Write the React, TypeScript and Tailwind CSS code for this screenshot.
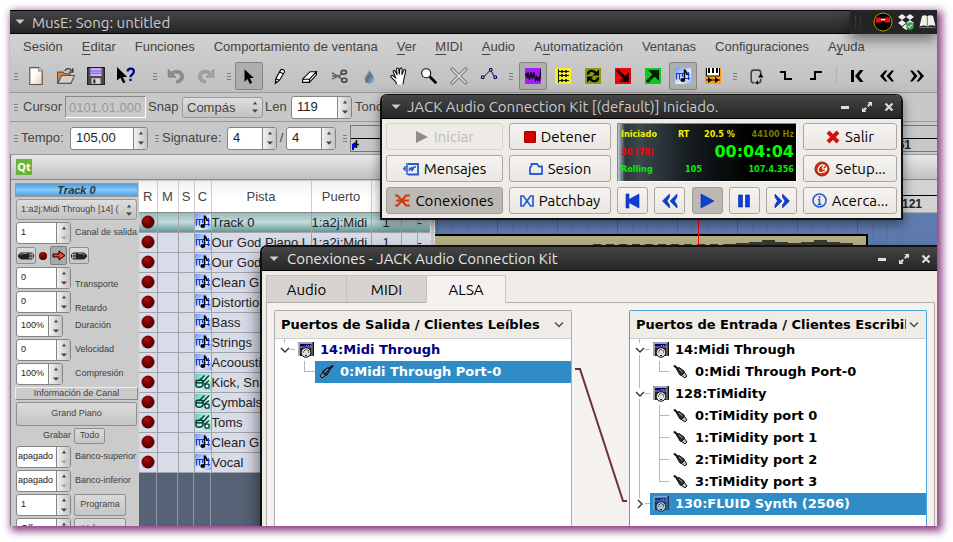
import React from "react";

const ubuntu = "font-['Ubuntu','Noto_Sans',sans-serif]";

/* ---------- small shared pieces ---------- */

function Grip() {
  return (
    <span className="flex flex-col gap-[2px] w-[4px] shrink-0" aria-hidden="true">
      <i className="h-px bg-[#808080]" />
      <i className="h-px bg-[#808080]" />
      <i className="h-px bg-[#808080]" />
    </span>
  );
}

function Arrow({ up = false, dim = false }: { up?: boolean; dim?: boolean }) {
  return (
    <svg width="6" height="4" viewBox="0 0 6 4" aria-hidden="true">
      <path d={up ? "M1 3.5L3 0.5L5 3.5z" : "M0 0.5L3 3.8L6 0.5z"} fill={dim ? "#a5a5a5" : "#444"} />
    </svg>
  );
}

function Spin({
  id,
  label,
  value,
  className,
  dimDown = false,
  size = "normal",
}: {
  id: string;
  label?: string;
  value: string;
  className: string;
  dimDown?: boolean;
  size?: "normal" | "small" | "tight";
}) {
  const text = {
    normal: "px-[5px] text-[13px]",
    small: "px-[4px] text-[9px]",
    tight: "pl-[1px] text-[9px]",
  }[size];
  return (
    <div className={`flex shrink-0 overflow-hidden rounded-[3px] border border-[#858585] bg-white ${className}`}>
      <input
        id={id}
        aria-label={label}
        defaultValue={value}
        className={`min-w-0 flex-1 bg-transparent text-[#222] outline-none ${text}`}
      />
      <span className="flex w-[14px] shrink-0 flex-col border-l border-[#858585] bg-linear-to-r from-[#f2f2f2] to-[#c4c4c4]">
        <button type="button" aria-label="Más" className="flex flex-1 items-center justify-center">
          <Arrow up />
        </button>
        <button type="button" aria-label="Menos" className="flex flex-1 items-center justify-center">
          <Arrow dim={dimDown} />
        </button>
      </span>
    </div>
  );
}

function Combo({ label, value, className }: { label: string; value: string; className: string }) {
  return (
    <div className={`relative shrink-0 ${className}`}>
      <select
        aria-label={label}
        className="h-full w-full appearance-none rounded-[3px] border border-[#999] bg-linear-to-b from-[#dedede] to-[#c2c2c2] pr-[16px] pl-[4px] text-[#444] outline-none"
      >
        <option>{value}</option>
      </select>
      <span className="pointer-events-none absolute inset-y-0 right-[5px] flex flex-col items-center justify-center gap-[4px]">
        <Arrow up />
        <Arrow />
      </span>
    </div>
  );
}

/* ---------- MusE tool icons ---------- */

function Ico({ children, size = 18, box = 16 }: { children: React.ReactNode; size?: number; box?: number }) {
  return (
    <svg width={size} height={size} viewBox={`0 0 ${box} ${box}`} fill="none" aria-hidden="true">
      {children}
    </svg>
  );
}

const NoteGlyph = () => (
  <>
    <rect width="16" height="16" fill="url(#noteBg)" />
    <path d="M1 5.500h8M11 6.500h4M10 10.500h5M1.500 5v6.500M4.500 5v6.500M7.500 5v4M13.500 4v8" stroke="#1a3fc4" strokeWidth="1.200" />
    <path d="M9.500 11V1.500c.5 2 3 2.500 2.500 5.500" stroke="#000" strokeWidth="1.600" />
    <ellipse cx="7.800" cy="12" rx="2.500" ry="2.100" fill="#000" />
  </>
);

const DrumGlyph = () => (
  <>
    <rect width="16" height="16" fill="url(#drumBg)" />
    <path d="M1 7.500v3.500c0 3 6 3 7 0V7.500M1 7.500c0-2 7-2 7 0s-7 2-7 0M4 7l5.500-5.500M8 8l6-6.500M9 10.500l5-4" stroke="#073b35" strokeWidth="1.500" />
    <circle cx="12" cy="12" r="2.200" stroke="#073b35" strokeWidth="1.300" fill="#e8fffa" />
  </>
);

const icons: Record<string, React.ReactNode> = {
  nuevo: (
    <Ico>
      <path d="M2.500 .5h8l3 3v12h-11z" fill="url(#paper)" stroke="#555" />
      <path d="M10.500 .5v3h3" fill="#fff" stroke="#777" />
    </Ico>
  ),
  abrir: (
    <Ico>
      <path d="M.5 14.500V4.500h5l1 1.500h5v2" fill="#d98a42" stroke="#7c4a1c" />
      <path d="M.8 14.500L4 7.500h11.500l-3 7z" fill="#d2cfca" stroke="#555" />
      <path d="M7 3.500c1-3 5-2.500 6 0m1-2.500v3.500h-3.500" stroke="#333" strokeWidth="1.200" />
    </Ico>
  ),
  guardar: (
    <Ico>
      <path d="M.5 .5h15v15h-15z" fill="#4b4b5c" stroke="#222" />
      <path d="M3 1h10v7H3z" fill="#cdb5f5" />
      <path d="M3 3.500h10M3 5.500h10" stroke="#7e4fd8" />
      <path d="M4 10h8v5H4z" fill="#d8d8d8" />
      <path d="M5.500 11h2v3.500h-2z" fill="#333" />
    </Ico>
  ),
  ayuda: (
    <Ico>
      <path d="M0 0v12l3-2.500 2.500 5 2-1-2.300-4.700H9z" fill="#000" />
      <path d="M9.500 4c0-3.500 5.500-3.500 5.500 0 0 2.500-3 2.500-3 5M12 10.500v2" stroke="#00008b" strokeWidth="2" />
    </Ico>
  ),
  deshacer: (
    <Ico>
      <path d="M1 2v7h7L5.500 6.500C8 4.500 12 5 12 8.500c0 2-1.500 3.200-3.500 3.500v2.200c4-.3 6.200-2.500 6.200-5.700C14.700 3 8 1.500 3.700 4.700z" fill="#8e8e8e" stroke="#777" strokeWidth=".6" />
    </Ico>
  ),
  rehacer: (
    <Ico>
      <path d="M15 2v7H8l2.500-2.500C8 4.500 4 5 4 8.500c0 2 1.500 3.200 3.500 3.500v2.200c-4-.3-6.200-2.500-6.200-5.700C1.300 3 8 1.500 12.300 4.700z" fill="#a4a4a4" stroke="#888" strokeWidth=".6" />
    </Ico>
  ),
  puntero: (
    <Ico>
      <path d="M4 2v11l2.700-2.300L8.800 15l2-1-2-4.200h3.500z" fill="#000" />
    </Ico>
  ),
  lapiz: (
    <Ico size={17}>
      <path d="M4 14.500l.5-4.500L9 2c1-1.500 4.500 0 3.500 2L8 11.500zM8 3.500l3.500 2M4.500 10l3.500 1.500" fill="#fff" stroke="#000" />
      <path d="M4 15l.3-3 2 1.200z" fill="#000" />
    </Ico>
  ),
  goma: (
    <Ico size={17}>
      <path d="M1.500 10.500l7-7h6l-6.500 7v3h-6.500zM1.500 10.500H8l6.500-7v3L8 13.500" fill="#fff" stroke="#000" />
    </Ico>
  ),
  tijera: (
    <Ico size={17}>
      <path d="M1 4.500l9.500 6M1 10.500l9.500-5M1 7.500h8" stroke="#666" strokeWidth="1.500" />
      <ellipse cx="12.500" cy="11.500" rx="2.500" ry="1.800" stroke="#444" strokeWidth="1.500" />
      <ellipse cx="12" cy="4" rx="2.500" ry="1.800" stroke="#444" strokeWidth="1.500" />
    </Ico>
  ),
  gota: (
    <Ico size={17}>
      <path d="M8 1.500c1 4 4.500 5.500 4.500 9 0 5.500-9 5.500-9 0C3.500 7 7 5.500 8 1.500z" fill="url(#drop)" />
    </Ico>
  ),
  mano: (
    <Ico>
      <path
        d="M5.500 15.500v-2L1 9c-.8-1.300.7-2.200 2-1l2 1.500L2.800 4c0-1.200 1.400-1.300 2 0l1.500 3L5.800 2c0-1.400 1.800-1.400 2 0l.4 4.500.6-4.700c.2-1.300 2-1 2 .2l-.3 5 1.700-4c.5-1.200 2.100-.7 1.800.5L12.500 10l-1 5.500"
        fill="#fff"
        stroke="#000"
        strokeWidth=".9"
      />
    </Ico>
  ),
  lupa: (
    <Ico>
      <path d="M8.500 8.500l6 6" stroke="#000" strokeWidth="2.400" />
      <circle cx="5.500" cy="5.500" r="4" fill="#fff" stroke="#111" />
    </Ico>
  ),
  mudo: (
    <Ico>
      <path d="M2 2l12 12M14 2L2 14" stroke="#777" strokeWidth="3.200" strokeLinecap="round" />
      <path d="M2 2l12 12M14 2L2 14" stroke="#ddd" strokeWidth="1.500" strokeLinecap="round" />
    </Ico>
  ),
  linea: (
    <Ico size={16}>
      <path d="M2 9.500l7.500-7.500 4.500 7.500" stroke="#111" />
      <path d="M.5 8h2.500v2.500H.5zM8.500 .5H11V3H8.500zM13 8h2.500v2.500H13z" fill="#bcd" stroke="#00005a" />
    </Ico>
  ),
  onda: (
    <Ico size={16}>
      <path d="M0 0h16v16H0z" fill="#a41dff" />
      <path d="M0 6h1l1 4 1-6 1.500 8 1.500-8 1.500 7 1.500-7 1.500 8 1-3 1 4 1-4 1 4 1.500-12 .5 3v5" stroke="#12001d" strokeWidth="1.300" />
    </Ico>
  ),
  lista: (
    <Ico size={16}>
      <path d="M0 0h16v16H0z" fill="#f6ef20" />
      <path d="M3.500 1v14M4 3.500h10M4 7.500h10M4 12.500h10" stroke="#111" />
      <path d="M7 2v3M11 2v3M7 6v3M11 6v3M7 11v3M11 11v3" stroke="#111" strokeWidth="1.600" />
    </Ico>
  ),
  ciclo: (
    <Ico size={16}>
      <path d="M0 0h16v16H0z" fill="#8d9a00" />
      <path d="M3 6.500c0-4 5-5 8-1.500M13 9.500c0 4-5 5-8 1.500" stroke="#000" strokeWidth="2.400" />
      <path d="M7.500 7.500H14V1.500zM8.500 8.500H2v6z" fill="#000" />
    </Ico>
  ),
  entrada: (
    <Ico size={16}>
      <path d="M0 0h16v16H0z" fill="#e80808" />
      <path d="M2 2l9 9" stroke="#1c0000" strokeWidth="3" />
      <path d="M14 4v10H4z" fill="#1c0000" />
    </Ico>
  ),
  salida: (
    <Ico size={16}>
      <path d="M0 0h16v16H0z" fill="#10c81c" />
      <path d="M2 14l9-9" stroke="#001c02" strokeWidth="3" />
      <path d="M3 2h11v11z" fill="#001c02" />
    </Ico>
  ),
  nota: (
    <Ico size={16}>
      <NoteGlyph />
    </Ico>
  ),
  piano: (
    <Ico size={16}>
      <path d="M0 0h16v16H0z" fill="#ff9c0a" />
      <path d="M1.500 0h13v8h-13z" fill="#fff" />
      <path d="M4 0v5M8 0v5M12 0v5" stroke="#000" strokeWidth="2" />
      <path d="M1.500 0v8h13V0M1 12h14" stroke="#000" />
      <path d="M3 9l4 3-4 3zM10 9l4 3-4 3z" fill="#000" />
    </Ico>
  ),
  bucle: (
    <Ico size={17}>
      <path d="M6 14H5.500C4 14 3 13 3 11.500v-7C3 3 4 2 5.500 2h4C11 2 12 3 12 4.500V6M12 10v1.500c0 1.500-1 2.500-2.500 2.500" stroke="#444" strokeWidth="1.500" />
      <path d="M9.500 9h5L12 5zM9.500 11.500v4L6.500 14z" fill="#000" />
    </Ico>
  ),
  pin: (
    <Ico size={16}>
      <path d="M2 4h5v7h7" stroke="#000" strokeWidth="2" />
    </Ico>
  ),
  pout: (
    <Ico size={16}>
      <path d="M2 11h5V4h7" stroke="#000" strokeWidth="2" />
    </Ico>
  ),
  inicio: (
    <Ico size={16}>
      <path d="M2 2h3v12H2zM11 2L6 8l5 6h3.500L10 8l4.500-6z" fill="#000" />
    </Ico>
  ),
  atras: (
    <Ico size={16}>
      <path d="M6 2.500L1 8l5 5.500h2.500L4.500 8l4-5.500zM12.500 2.500L7.500 8l5 5.500H15L11 8l4-5.500z" fill="#000" />
    </Ico>
  ),
  adelante: (
    <Ico size={16}>
      <path d="M10 2.500L15 8l-5 5.500H7.500L11.500 8l-4-5.500zM3.500 2.500L8.500 8l-5 5.500H1L5 8 1 2.500z" fill="#000" />
    </Ico>
  ),
};

function Defs() {
  return (
    <svg width="0" height="0" className="absolute" aria-hidden="true">
      <defs>
        <linearGradient id="paper" x1="0" y1="0" x2="1" y2="1">
          <stop offset="0.4" stopColor="#fff" />
          <stop offset="1" stopColor="#f3c9a6" />
        </linearGradient>
        <linearGradient id="drop" x1="0" y1="0" x2="1" y2="1">
          <stop offset="0.2" stopColor="#8c9aa8" />
          <stop offset="0.5" stopColor="#4f7296" />
          <stop offset="1" stopColor="#a9c4dd" />
        </linearGradient>
        <linearGradient id="noteBg" x1="0" y1="0" x2="1" y2="1">
          <stop offset="0" stopColor="#6f98ff" />
          <stop offset="0.6" stopColor="#e6efff" />
          <stop offset="1" stopColor="#8db0ff" />
        </linearGradient>
        <linearGradient id="drumBg" x1="0" y1="0" x2="1" y2="1">
          <stop offset="0" stopColor="#5ccfc0" />
          <stop offset="0.6" stopColor="#c8f6ee" />
          <stop offset="1" stopColor="#6cd8c8" />
        </linearGradient>
        <radialGradient id="rec" cx="0.4" cy="0.3" r="0.7">
          <stop offset="0" stopColor="#a01414" />
          <stop offset="0.5" stopColor="#7a0000" />
          <stop offset="1" stopColor="#4a0000" />
        </radialGradient>
      </defs>
    </svg>
  );
}

function Tool({ name, on = false }: { name: string; on?: boolean }) {
  return (
    <button
      type="button"
      aria-label={name}
      className={`mx-px flex h-[28px] w-[28px] shrink-0 items-center justify-center rounded-[2px] border ${on ? "border-[#858585] bg-[#aeaeae]" : "border-transparent"}`}
    >
      {icons[name]}
    </button>
  );
}

const menus: [string, number][] = [
  ["Sesión", -1],
  ["Editar", 0],
  ["Funciones", -1],
  ["Comportamiento de ventana", -1],
  ["Ver", 0],
  ["MIDI", 0],
  ["Audio", 0],
  ["Automatización", 1],
  ["Ventanas", -1],
  ["Configuraciones", -1],
  ["Ayuda", 1],
];

function MenuBar() {
  return (
    <nav className="flex h-[26px] items-center gap-[19px] pl-[13px] text-[13px] text-[#444]">
      {menus.map(([m, u]) => (
        <button key={m} type="button" className="shrink-0 whitespace-nowrap">
          {u < 0 ? (
            m
          ) : (
            <>
              {m.slice(0, u)}
              <span className="underline underline-offset-3">{m[u]}</span>
              {m.slice(u + 1)}
            </>
          )}
        </button>
      ))}
    </nav>
  );
}

function ToolBar() {
  const set = (names: string[], on: string[] = []) => names.map((n) => <Tool key={n} name={n} on={on.includes(n)} />);
  return (
    <div className="flex h-[33px] items-center border-b border-[#999]">
      <div className="flex w-[11px] shrink-0 pl-[4px]"><Grip /></div>
      {set(["nuevo", "abrir", "guardar", "ayuda"])}
      <div className="flex w-[20px] shrink-0 justify-center pl-[8px]"><Grip /></div>
      {set(["deshacer", "rehacer"])}
      <div className="flex w-[13px] shrink-0 justify-center pl-[3px]"><Grip /></div>
      {set(["puntero", "lapiz", "goma", "tijera", "gota", "mano", "lupa", "mudo", "linea"], ["puntero"])}
      <div className="flex w-[14px] shrink-0 justify-center"><Grip /></div>
      {set(["onda", "lista", "ciclo", "entrada", "salida", "nota", "piano"], ["onda", "nota"])}
      <div className="flex w-[13px] shrink-0 justify-center"><Grip /></div>
      {set(["bucle", "pin", "pout"])}
      <div className="flex w-[11px] shrink-0 justify-center"><i className="h-[18px] w-px bg-[#b0b0b0]" /></div>
      {set(["inicio", "atras", "adelante"])}
    </div>
  );
}

function CursorBar() {
  return (
    <div className="flex h-[29px] items-center border-b border-[#999] pl-[4px] text-[13px] text-[#444]">
      <Grip />
      <label htmlFor="cursor" className="ml-[5px] w-[42px]">Cursor</label>
      <input
        id="cursor"
        disabled
        defaultValue="0101.01.000"
        className="h-[22px] w-[81px] border border-t-[#888] border-r-white border-b-white border-l-[#888] bg-[#c9c9c9] px-[3px] text-[13px] text-[#9a9a9a]"
      />
      <span className="ml-[2px] w-[34px]">Snap</span>
      <Combo label="Snap" value="Compás" className="h-[21px] w-[81px]" />
      <label htmlFor="len" className="ml-[2px] w-[26px]">Len</label>
      <Spin id="len" value="119" className="h-[23px] w-[61px]" />
      <span className="ml-[3px]">Tono</span>
    </div>
  );
}

function Flag() {
  return (
    <svg width="8" height="10" viewBox="0 0 8 10" aria-hidden="true">
      <path d="M0 10V4l5-3v6L2 8v2z" fill="#0000e0" />
      <path d="M4.500 0v8M4 4.500h3" stroke="#111" strokeWidth="1.500" />
    </svg>
  );
}

function TempoBar() {
  return (
    <div className="flex h-[33px] items-center border-b border-[#999] pl-[4px] text-[13px] text-[#444]">
      <Grip />
      <label htmlFor="tempo" className="ml-[3px] w-[49px]">Tempo:</label>
      <Spin id="tempo" value="105,00" className="h-[23px] w-[78px]" />
      <span className="mr-[3px] ml-[7px]"><Grip /></span>
      <label htmlFor="sig" className="w-[65px]">Signature:</label>
      <Spin id="sig" value="4" className="h-[23px] w-[50px]" />
      <span className="w-[9px] text-center">/</span>
      <Spin id="sig2" label="Denominador" value="4" className="h-[23px] w-[50px]" />
      <span className="mr-[3px] ml-[7px]"><Grip /></span>
      <div className="flex h-[27px] flex-1 flex-col border border-r-0 border-[#777]">
        <div className="h-[13px] border-b border-black" />
        <div className="flex flex-1 items-center justify-between pr-[26px] pl-px">
          <Flag />
          <span className="text-[12px] leading-none font-bold text-[#222]">61</span>
        </div>
      </div>
    </div>
  );
}

/* ---------- track strip ---------- */

function Param({
  id,
  label,
  value,
  narrow = false,
  low = false,
  dimDown = false,
  tight = false,
}: {
  id: string;
  label: string;
  value: string;
  narrow?: boolean;
  low?: boolean;
  dimDown?: boolean;
  tight?: boolean;
}) {
  return (
    <div className={`flex h-[22px] shrink-0 ${low ? "items-end" : "items-center"}`}>
      <div className="flex w-[59px] shrink-0">
        <Spin
          id={id}
          value={value}
          size={tight ? "tight" : "small"}
          dimDown={dimDown}
          className={narrow ? "h-[22px] w-[47px]" : "h-[22px] w-[55px]"}
        />
      </div>
      <label htmlFor={id} className={`whitespace-nowrap ${low ? "leading-[9px]" : ""}`}>{label}</label>
    </div>
  );
}

const softBtn = "rounded-[2px] border border-[#8f8f8f] bg-linear-to-b from-[#dadada] to-[#c6c6c6] text-[#444]";

function Jack({ flip = false }: { flip?: boolean }) {
  return (
    <svg width="16" height="10" viewBox="0 0 16 10" className={flip ? "-scale-x-100" : ""} aria-hidden="true">
      <path d="M0 4l3-2.500h8v7H3L0 6z" fill="#222" />
      <path d="M2 4l3-1.500h4" stroke="#888" fill="none" />
      <path d="M11 2h2.500l2 1.500v3l-2 1.500H11z" fill="#fff" stroke="#222" />
      <path d="M10 5h6M13 2v6" stroke="#222" />
    </svg>
  );
}

function TrackStrip() {
  return (
    <aside className="flex w-[125px] shrink-0 flex-col gap-[2px] overflow-hidden pt-[2px] pl-[1px] pr-[1px] text-[9px] text-[#404040]">
      <h2 className="h-[14px] shrink-0 border border-[#999] bg-linear-to-b from-[#4fa0dc] via-[#86c8f8] to-[#4fa0dc] text-center text-[11px] leading-[12px] font-bold text-[#333] italic">
        Track 0
      </h2>
      <div className="flex flex-col gap-[2px] px-px">
        <Combo label="Puerto MIDI" value="1:a2j:Midi Through [14] (" className="h-[21px] w-full" />
        <Param id="canal" label="Canal de salida" value="1" dimDown />
        <div className="flex h-[19px] shrink-0 items-center gap-[2px]">
          <button type="button" aria-label="Entradas" className={`flex h-[17px] w-[20px] items-center justify-center ${softBtn}`}><Jack /></button>
          <svg width="10" height="10" viewBox="0 0 10 10" aria-hidden="true"><circle cx="5" cy="5" r="4" fill="url(#rec)" /></svg>
          <button type="button" aria-label="Monitor" className="flex h-[19px] w-[17px] items-center justify-center rounded-[2px] border border-[#808080] bg-[#a9a9a9]">
            <svg width="14" height="11" viewBox="0 0 14 11" aria-hidden="true"><path d="M1 4h6V1l6 4.500L7 10V7H1z" fill="#ff3b3b" stroke="#000" /></svg>
          </button>
          <button type="button" aria-label="Salidas" className={`flex h-[17px] w-[20px] items-center justify-center ${softBtn}`}><Jack flip /></button>
        </div>
        <Param id="transporte" label="Transporte" value="0" low />
        <Param id="retardo" label="Retardo" value="0" low />
        <Param id="duracion" label="Duración" value="100%" narrow />
        <Param id="velocidad" label="Velocidad" value="0" />
        <Param id="compresion" label="Compresión" value="100%" narrow />
      </div>
      <h3 className="h-[13px] shrink-0 border border-t-[#eee] border-r-[#888] border-b-[#888] border-l-[#eee] text-center leading-[11px]">Información de Canal</h3>
      <div className="flex flex-col gap-[2px] px-px">
        <button type="button" className={`h-[24px] shrink-0 ${softBtn}`}>Grand Piano</button>
        <div className="flex h-[16px] shrink-0 items-center">
          <span className="w-[55px] text-right">Grabar</span>
          <button type="button" className={`ml-[3px] h-[16px] w-[31px] ${softBtn}`}>Todo</button>
        </div>
        <Param id="bsup" label="Banco-superior" value="apagado" dimDown tight />
        <Param id="binf" label="Banco-inferior" value="apagado" dimDown tight />
        <div className="flex shrink-0 gap-[3px]">
          <Spin id="prog" label="Programa" value="1" size="small" className="h-[22px] w-[55px]" />
          <button type="button" className={`w-[52px] ${softBtn}`}>Programa</button>
        </div>
        <div className="flex shrink-0 gap-[3px]">
          <Spin id="vol" label="Volumen" value="Off" size="small" className="h-[22px] w-[55px]" />
          <button type="button" className={`w-[52px] ${softBtn}`}>Volumen</button>
        </div>
      </div>
    </aside>
  );
}

/* ---------- track list ---------- */

const tracks: [string, boolean][] = [
  ["Track 0", false],
  ["Our God Piano L", false],
  ["Our God", false],
  ["Clean G", false],
  ["Distortion", false],
  ["Bass", false],
  ["Strings", false],
  ["Acooustic", false],
  ["Kick, Snare", true],
  ["Cymbals", true],
  ["Toms", true],
  ["Clean G", false],
  ["Vocal", false],
];

const colClass = ["w-[18px]", "w-[21px]", "w-[16px]", "w-[17px]", "w-[100px]", "w-[60px]", "w-[30px]", "w-[16px]", "w-[13px]"];
const heads = ["R", "M", "S", "C", "Pista", "Puerto", "C", "", ""];

function TrackList() {
  const cell = "border-r border-b border-[#a2a2a8] p-0";
  return (
    <div className="flex w-[291px] shrink-0 flex-col overflow-hidden">
      <table className="w-[291px] table-fixed border-collapse text-[13px] text-[#222]">
        <colgroup>
          {colClass.map((c, i) => (
            <col key={i} className={c} />
          ))}
        </colgroup>
        <thead>
          <tr className="h-[31px] bg-white text-[#444]">
            {heads.map((h, i) => (
              <th key={i} className="border-r border-b border-r-[#ccc] border-b-[#888] bg-linear-to-b from-[#f0f0f0] via-white to-white p-0 font-normal">{h}</th>
            ))}
          </tr>
        </thead>
        <tbody>
          {tracks.map(([name, drum], i) => (
            <tr key={i} className={`h-[20px] ${i === 0 ? "bg-linear-to-b from-[#8fb8b8] via-[#c3dada] to-[#5f9898]" : "bg-[#d8dce8]"}`}>
              <td className={cell}>
                <svg width="14" height="14" viewBox="0 0 14 14" className="mx-auto block" aria-label="Grabar"><circle cx="7" cy="7" r="6.500" fill="url(#rec)" /></svg>
              </td>
              <td className={cell} />
              <td className={cell} />
              <td className={cell}>
                <Ico size={16}>{drum ? <DrumGlyph /> : <NoteGlyph />}</Ico>
              </td>
              <td className={`overflow-hidden leading-[19px] whitespace-nowrap ${cell}`}>{name}</td>
              <td className={`overflow-hidden leading-[19px] whitespace-nowrap ${cell}`}>{i < 2 ? "1:a2j:Midi" : ""}</td>
              <td className={`text-center leading-[19px] ${cell}`}>{i < 2 ? "1" : ""}</td>
              <td className={cell} />
              <td className={`leading-[19px] ${cell}`}>{i < 2 ? "-" : ""}</td>
            </tr>
          ))}
        </tbody>
      </table>
      <div className="flex flex-1 bg-[#566275]">
        {colClass.map((c, i) => (
          <i key={i} className={`${c} shrink-0 border-r border-[#8e94a0]`} />
        ))}
      </div>
    </div>
  );
}

function Arranger() {
  const notes = [0, 0, 0, 0, 0, 0, 0, 0, 0, 0, 0, 1, 2, 4, 2, 1, 2, 4, 2, 1];
  return (
    <div className="flex min-w-0 flex-1 flex-col">
      <div className="flex h-[32px] shrink-0 flex-col border-b border-[#aaa] bg-[#d2d2d2]">
        <div className="h-[15px] border-b border-black" />
        <div className="flex flex-1 items-center justify-end pr-[15px] text-[12px] leading-none font-bold text-[#222]">121</div>
      </div>
      <svg className="min-h-0 w-full flex-1" aria-label="Pistas">
        <rect width="100%" height="100%" fill="#5f7bae" />
        {Array.from({ length: 32 }, (_, i) => (
          <path key={i} d={`M${i * 15 + 2.5} 0v312`} stroke={i % 4 ? "#5a75a6" : "#4d6592"} />
        ))}
        <rect x="-2" y="22" width="434" height="24" fill="#b8b085" stroke="#000" strokeWidth="2" />
        {notes.map((h, i) => (
          <rect key={i} x={158 + i * 13} y={31 - h} width={i < 10 ? 8 : 13} height={h + 2} fill="#3a3a32" />
        ))}
        <path d="M263.500 0v40" stroke="#f00" />
      </svg>
    </div>
  );
}

/* ---------- window frames ---------- */

function WinButtons() {
  return (
    <span className="ml-auto flex items-center gap-[10px]">
      <button type="button" aria-label="Minimizar"><svg width="12" height="12" viewBox="0 0 12 12"><path d="M2 5h8v3H2z" fill="#ddd" /></svg></button>
      <button type="button" aria-label="Maximizar"><svg width="12" height="12" viewBox="0 0 12 12"><path d="M6.500 1H11v4.500L9.500 4 7.500 6 6 4.500l2-2zM1 6.500V11h4.500L4 9.500l2-2L4.500 6l-2 2z" fill="#ddd" /></svg></button>
      <button type="button" aria-label="Cerrar"><svg width="12" height="12" viewBox="0 0 12 12"><path d="M2.500 2.500l7 7M9.500 2.500l-7 7" stroke="#ddd" strokeWidth="2.200" /></svg></button>
    </span>
  );
}

function TitleArrow() {
  return (
    <svg width="10" height="6" viewBox="0 0 10 6" aria-hidden="true"><path d="M.5 .5h9L5 5z" fill="#ccc" /></svg>
  );
}

const bar = "flex h-[24px] shrink-0 items-center border-b border-black bg-linear-to-b from-[#454545] to-[#262626] text-[15px] leading-none";

/* ---------- JACK control ---------- */

const jBtn = "flex h-[27px] items-center justify-center gap-[5px] rounded-[3px] border whitespace-nowrap text-[15px] leading-none";
const jUp = "border-[#aaa6a2] bg-linear-to-b from-[#f5f3f1] to-[#ebe7e3] text-black";
const jDown = "border-[#a09c98] bg-[#bcb8b4] text-black";
const jOff = "border-[#d6d2ce] bg-[#eeebe7] text-[#bcbab8]";

function Transport({ label, d, down = false }: { label: string; d: string; down?: boolean }) {
  return (
    <button type="button" aria-label={label} className={`${jBtn} ${down ? jDown : jUp} w-[31px]`}>
      <svg width="16" height="16" viewBox="0 0 16 16"><path d={d} fill="#0b3fd8" stroke="#0a2a9a" strokeWidth=".6" /></svg>
    </button>
  );
}

function JackWindow() {
  return (
    <section className={`absolute top-[84px] left-[370px] flex w-[523px] flex-col overflow-hidden rounded-t-[7px] border-2 border-t border-[#111] bg-[#efebe7] shadow-[0_4px_12px_rgba(0,0,0,.45)] ${ubuntu}`}>
      <header className={`${bar} gap-[6px] pr-[6px] pl-[9px] text-[#ccc]`}>
        <TitleArrow />
        <h2>JACK Audio Connection Kit [(default)] Iniciado.</h2>
        <WinButtons />
      </header>
      <div className="grid grid-cols-[117px_102px_180px_1fr] gap-x-[6px] p-[4px]">
        <div className="flex flex-col gap-[5px]">
          <button type="button" disabled className={`${jBtn} ${jOff}`}>
            <svg width="14" height="14" viewBox="0 0 14 14"><path d="M1 1l12 6-12 6z" fill="#8c8c8c" /></svg>
            Iniciar
          </button>
          <button type="button" className={`${jBtn} ${jUp}`}>
            <svg width="16" height="14" viewBox="0 0 16 14" fill="none" stroke="#2a5bd0"><path d="M5 2h10v10.500H5" strokeWidth="1.800" /><path d="M0 6.500h2V4v5M4 1v12M6.500 5.500V9M6.500 7h1.500l1-2v4l2-4h2" strokeWidth="1.500" /></svg>
            Mensajes
          </button>
          <button type="button" className={`${jBtn} ${jDown}`}>
            <svg width="15" height="13" viewBox="0 0 15 13" fill="none" stroke="#d83a10" strokeWidth="2.200"><path d="M0 1.500h2.500l8.500 10h4M0 11.500h2.500L11 1.500h4M1 6.500h13" /></svg>
            Conexiones
          </button>
        </div>
        <div className="flex flex-col gap-[5px]">
          <button type="button" className={`${jBtn} ${jUp}`}>
            <i className="h-[12px] w-[12px] rounded-[1px] border border-[#a00000] bg-[#d60000]" />
            Detener
          </button>
          <button type="button" className={`${jBtn} ${jUp}`}>
            <svg width="14" height="12" viewBox="0 0 14 12" fill="none" stroke="#2a5bd0" strokeWidth="1.800"><path d="M1 11V4.500L2.500 3V1h5.500l2 2.500h3V11z" /></svg>
            Sesion
          </button>
          <button type="button" className={`${jBtn} ${jUp}`}>
            <svg width="14" height="12" viewBox="0 0 14 12" fill="none" stroke="#2a5bd0" strokeWidth="1.700"><path d="M1 1h2.500l7 10H13V1h-2.500l-7 10H1z" /></svg>
            Patchbay
          </button>
        </div>
        <div className="flex flex-col gap-[5px]">
          <div className="flex h-[59px] flex-col justify-between border border-t-[#888] border-r-white border-b-white border-l-[#888] bg-[linear-gradient(90deg,#b8ccd4_0%,#2c383d_4%,#3a474d_12%,#161c1f_40%,#000_75%)] pt-[5px] pr-[2px] pb-[6px] pl-[3px] font-['DejaVu_Sans_Condensed','DejaVu_Sans',sans-serif] text-[9px] leading-[11px] font-bold">
            <div className="flex text-[#f0f000]">
              <span className="w-[57px]">Iniciado</span>
              <span className="w-[26px]">RT</span>
              <span>20.5 %</span>
              <span className="ml-auto text-[#7a7a00]">44100 Hz</span>
            </div>
            <div className="flex h-[16px] items-center justify-between text-[#ff0000]">
              <span>30 (78)</span>
              <span className="font-['DejaVu_Sans',sans-serif] text-[16px] leading-[16px] text-[#00ff00]">00:04:04</span>
            </div>
            <div className="flex text-[#00f000]">
              <span className="w-[64px]">Rolling</span>
              <span>105</span>
              <span className="ml-auto">107.4.356</span>
            </div>
          </div>
          <div className="flex justify-between">
            <Transport label="Inicio" d="M1 1h3v5.500L14 1v14L4 9.500V15H1z" />
            <Transport label="Retroceder" d="M7.500 1v3L5 8l2.500 4v3L.5 8zM15 1v3l-2.500 4 2.500 4v3L8 8z" />
            <Transport label="Reproducir" d="M2 1l13 7-13 7z" down />
            <Transport label="Pausa" d="M2.500 2h4v12h-4zM9.500 2h4v12h-4z" />
            <Transport label="Avanzar" d="M8.500 1v3L11 8l-2.500 4v3l7-7zM1 1v3l2.500 4L1 12v3l7-7z" />
          </div>
        </div>
        <div className="flex flex-col gap-[5px]">
          <button type="button" className={`${jBtn} ${jUp}`}>
            <svg width="14" height="14" viewBox="0 0 14 14"><path d="M2 2l10 10M12 2L2 12" stroke="#d41010" strokeWidth="4" /></svg>
            Salir
          </button>
          <button type="button" className={`${jBtn} ${jUp}`}>
            <svg width="16" height="16" viewBox="0 0 16 16" fill="none"><circle cx="8" cy="8" r="7" fill="#c83208" stroke="#8a2000" /><path d="M10.500 4.500l-2 2 .5 1.500 2 .3 1.500-1.800c.5 3-1.500 4.500-3.500 4.500-3.500 2-6-1-4.500-4S8 3 10.500 4.500z" fill="#c83208" stroke="#fff" strokeWidth="1.300" /></svg>
            Setup...
          </button>
          <button type="button" className={`${jBtn} ${jUp}`}>
            <svg width="15" height="15" viewBox="0 0 15 15" fill="none" stroke="#2a5bd0"><circle cx="7.500" cy="7.500" r="6.500" strokeWidth="1.600" /><path d="M7.500 3v2M6 6.500h1.500v5M5.500 11.500h4" strokeWidth="1.600" /></svg>
            Acerca...
          </button>
        </div>
      </div>
    </section>
  );
}

/* ---------- Connections ---------- */

function Client({ blue = false }: { blue?: boolean }) {
  return (
    <svg width="16" height="16" viewBox="0 0 16 16" fill="none" aria-hidden="true">
      <path d="M0 0h16v14H0z" fill={blue ? "#16324a" : "#111"} />
      <path d="M.5 14V.5h14" stroke={blue ? "#7ea6c4" : "#a8a8a8"} />
      <path d="M1 1h13.500v13H1z" fill={blue ? "#5d8fb4" : "#a0a0a0"} />
      <path d="M2 2h11.500v2.500H2z" fill={blue ? "#0b2aa0" : "#000080"} />
      <path d="M8 3.500h5" stroke="#3c6" strokeDasharray="1 1" />
      <path d="M2 5.500h11.500V14H2z" fill={blue ? "#16324a" : "#222"} />
      <circle cx="8" cy="10.500" r="4.800" fill={blue ? "#9dc0da" : "#dcdcdc"} stroke={blue ? "#16324a" : "#111"} />
      <path d="M5 10h1M10 10h1M7.500 7.500h1M6 8.500h1M9.500 8.500h1M7 13.500h2" stroke="#222" />
    </svg>
  );
}

function Plug({ out = false, blue = false }: { out?: boolean; blue?: boolean }) {
  return (
    <svg width="16" height="16" viewBox="0 0 16 16" fill="none" className={out ? "-scale-x-100" : ""} aria-hidden="true">
      <path d="M1 1.500l4 3.500" stroke="#111" strokeWidth="2.200" />
      <path d="M3.500 5L6 3.500l5 3.500 .5 1.500-3 3-1.500-.5z" fill={blue ? "#1c3a50" : "#2c2c2c"} stroke="#111" />
      <path d="M6 5l3.500 3" stroke={blue ? "#8fc0e0" : "#aaa"} />
      <path d="M8.500 11.500l3-3L14 12l-2 2z" fill={blue ? "#5a8fb4" : "#bbb"} stroke="#111" />
    </svg>
  );
}

type Row = { t: string; kind: "open" | "closed" | "child" | "last"; sel?: boolean; color?: string; rail?: boolean };

function Guide({ row, first }: { row: Row; first: boolean }) {
  if (row.kind === "open" || row.kind === "closed") {
    return (
      <svg width="20" height="22" viewBox="0 0 20 22" fill="none" className="shrink-0" aria-hidden="true">
        <path d={`M9.500 0v${first ? 4 : 5}M15 10.500h5`} stroke="#b8b8b8" />
        {row.rail && <path d="M9.500 16v6" stroke="#b8b8b8" />}
        <path d={row.kind === "open" ? "M6 9l4 4 4-4" : "M8 7l4 4-4 4"} stroke="#333" strokeWidth="1.400" />
      </svg>
    );
  }
  return (
    <svg width="40" height="22" viewBox="0 0 40 22" fill="none" className="shrink-0" aria-hidden="true">
      {row.rail && <path d="M9.500 0v22" stroke="#b8b8b8" />}
      <path d={`M29.500 0v${row.kind === "last" ? 11 : 22}M29.500 10.500h10`} stroke="#b8b8b8" />
    </svg>
  );
}

function PortTree({ title, rows, out = false, focus = false }: { title: string; rows: Row[]; out?: boolean; focus?: boolean }) {
  return (
    <div className={`flex w-[298px] shrink-0 flex-col overflow-hidden rounded-t-[2px] border border-b-0 bg-white font-['DejaVu_Sans',sans-serif] text-[13px] font-bold ${focus ? "border-[#4ba3dc]" : "border-[#b0aca8]"}`}>
      <button type="button" className="flex h-[28px] shrink-0 items-center border-b border-[#d0ccc8] bg-[#efebe7] px-[6px] text-left text-black">
        <span className="flex-1 overflow-hidden whitespace-nowrap">{title}</span>
        <svg width="14" height="8" viewBox="0 0 14 8" fill="none" className="shrink-0"><path d="M4 1.500l4 4 4-4" stroke="#444" strokeWidth="1.300" /></svg>
      </button>
      <ul>
        {rows.map((r, i) => {
          const child = r.kind === "child" || r.kind === "last";
          return (
            <li key={r.t} className="flex h-[22px]">
              <Guide row={r} first={i === 0} />
              <span className={`flex flex-1 items-center gap-[6px] pl-[3px] whitespace-nowrap ${r.sel ? "bg-[#308cc6] text-white" : r.color ?? "text-black"}`}>
                {child ? <Plug out={out} blue={r.sel} /> : <Client blue={r.sel} />}
                {r.t}
              </span>
            </li>
          );
        })}
      </ul>
    </div>
  );
}

const tabs = ["Audio", "MIDI", "ALSA"];

function Connections() {
  return (
    <section className={`absolute top-[235px] right-0 bottom-0 left-[250px] flex flex-col overflow-hidden rounded-tl-[7px] border-t-2 border-l-2 border-[#111] bg-[#efebe7] shadow-[0_10px_18px_rgba(0,0,0,.6)] ${ubuntu}`}>
      <header className={`${bar} gap-[8px] pr-[5px] pl-[7px] text-[#e6e6e6]`}>
        <TitleArrow />
        <h2>Conexiones - JACK Audio Connection Kit</h2>
        <WinButtons />
      </header>
      <div role="tablist" className="relative mt-[4px] ml-[4px] flex h-[28px] shrink-0 text-[15px] leading-none">
        {tabs.map((t, i) => (
          <button
            key={t}
            type="button"
            role="tab"
            aria-selected={i === 2}
            className={`w-[80px] border border-[#c4c0bc] ${i === 2 ? "z-10 rounded-t-[2px] border-[#b0aca8] border-b-[#f4f1ee] bg-[#f4f1ee]" : "border-r-0 border-b-[#b0aca8] bg-[#d7d3d0]"}`}
          >
            {t}
          </button>
        ))}
      </div>
      <div className="-mt-px mr-[2px] ml-[4px] flex flex-1 rounded-tr-[2px] border border-b-0 border-[#b0aca8] bg-[#f4f1ee] px-[7px] pt-[7px]">
        <PortTree
          out
          title="Puertos de Salida / Clientes Leíbles"
          rows={[
            { t: "14:Midi Through", kind: "open", color: "text-[#000080]" },
            { t: "0:Midi Through Port-0", kind: "last", sel: true },
          ]}
        />
        <svg className="min-w-0 flex-1" height="214" viewBox="0 0 57 214" preserveAspectRatio="none" fill="none" aria-hidden="true">
          <path d="M3 59h5L51 191h4" stroke="#6a3434" strokeWidth="2" />
        </svg>
        <PortTree
          focus
          title="Puertos de Entrada / Clientes Escribibles"
          rows={[
            { t: "14:Midi Through", kind: "open", rail: true },
            { t: "0:Midi Through Port-0", kind: "last", rail: true },
            { t: "128:TiMidity", kind: "open", rail: true },
            { t: "0:TiMidity port 0", kind: "child", rail: true },
            { t: "1:TiMidity port 1", kind: "child", rail: true },
            { t: "2:TiMidity port 2", kind: "child", rail: true },
            { t: "3:TiMidity port 3", kind: "last", rail: true },
            { t: "130:FLUID Synth (2506)", kind: "closed", sel: true },
          ]}
        />
      </div>
    </section>
  );
}

/* ---------- desktop ---------- */

export default function App() {
  return (
    <div className="h-screen overflow-hidden bg-white pt-[10px] pr-[16px] pb-[16px] pl-[10px] font-['Liberation_Sans',Arial,sans-serif]">
      <Defs />
      <main className="relative h-full overflow-hidden shadow-[3px_3px_8px_2px_#8a3d82]">
        <div className="flex h-full flex-col overflow-hidden bg-[#cbcbcb]">
          <header className={`${bar} relative z-10 gap-[7px] border-t pl-[5px] text-[#ccc] ${ubuntu}`}>
            <TitleArrow />
            <h1>MusE: Song: untitled</h1>
            <div className="ml-auto flex h-[24px] w-[87px] items-center justify-end gap-[4px] bg-[#242424] pr-px shadow-[0_5px_14px_rgba(0,0,0,.5)]">
              <i className="mr-auto ml-[5px] h-[12px] w-[6px] border-x border-dotted border-[#444]" />
              <svg width="20" height="20" viewBox="0 0 20 20" aria-label="QjackCtl"><circle cx="10" cy="10" r="9" fill="#000" stroke="#a89c10" /><path d="M3 5.500h4.500L9 7h2l1.500-1.500H17v5h-4.500L11 9H9l-1.500 1.500H3z" fill="#e81010" /><path d="M8 7.500h4" stroke="#fff" strokeWidth="1.500" /></svg>
              <svg width="18" height="18" viewBox="0 0 18 18" aria-label="Dropbox"><path d="M5 1l4 3-4 3-4-3zM13 1l4 3-4 3-4-3zM5 7l4 3-4 3-4-3zM13 7l4 3-4 3-4-3zM5 14l4-3 4 3-4 3z" fill="#eee" /><circle cx="13" cy="13" r="3.800" fill="#2fa84a" /><path d="M11 13l1.500 1.500L15 11.500" stroke="#fff" fill="none" /></svg>
              <svg width="17" height="16" viewBox="0 0 17 16" aria-label="Diccionario"><path d="M3 2c2-1 4-1 5 .5C10 1 12 1 14 2l2.500 10c-3-1-6-1-8 .5-2-1.500-5-1.500-8 0z" fill="#f2f0ea" /><path d="M8.300 2.500v10M.5 13.500h16" stroke="#8a6a50" /></svg>
            </div>
          </header>
          <div className="shrink-0 bg-linear-to-b from-[#d2d2d2] to-[#bfbfbf]">
            <MenuBar />
            <ToolBar />
          </div>
          <div className="shrink-0 bg-[#c8c8c8]">
            <CursorBar />
            <TempoBar />
          </div>
          <div className="flex min-h-0 flex-1 flex-col border-l border-[#777]">
            <div className="flex h-[25px] shrink-0 items-center rounded-tl-[4px] border-b border-[#888] bg-linear-to-b from-[#e9e9e9] via-[#d4d4d4] to-[#c2c2c2] pl-[5px]">
              <svg width="16" height="16" viewBox="0 0 16 16" aria-label="Qt">
                <rect width="16" height="16" fill="#6ab43a" />
                <text x="8" y="12" textAnchor="middle" fontSize="11" fontWeight="bold" fill="#fff" fontFamily="Noto Sans">Qt</text>
              </svg>
            </div>
            <div className="flex min-h-0 flex-1 pt-px pl-[3px]">
              <TrackStrip />
              <TrackList />
              <div className="w-[5px] shrink-0 border-x border-dotted border-white bg-[#c8c8c8]" />
              <Arranger />
            </div>
          </div>
        </div>
        <JackWindow />
        <Connections />
      </main>
    </div>
  );
}
